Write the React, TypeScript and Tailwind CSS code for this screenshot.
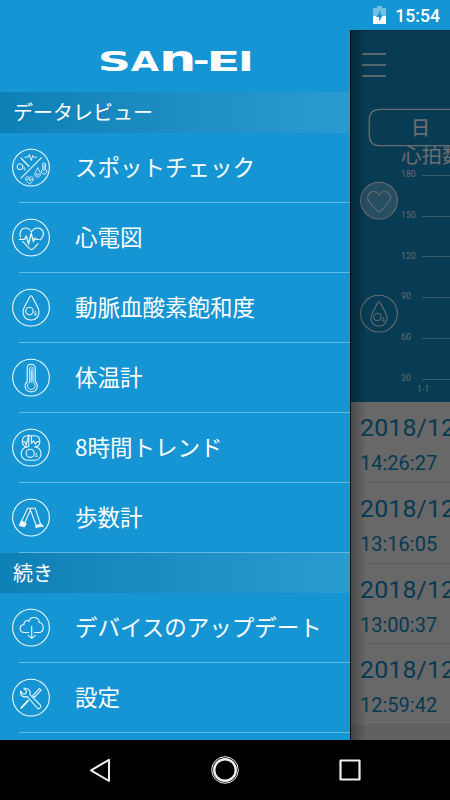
import React from "react";

const jp = "font-['Noto_Sans_CJK_JP',sans-serif]";
const roboto = "font-['Roboto',sans-serif]";

function Ring({ children, filled = false }: { children: React.ReactNode; filled?: boolean }) {
  return (
    <svg width="38" height="38" viewBox="0 0 38 38" fill="none" stroke="currentColor" strokeWidth="1.1" strokeLinecap="round" strokeLinejoin="round" className="shrink-0 overflow-visible">
      <circle cx="19" cy="18.6" r="18.4" fill={filled ? "#274d60" : "none"} />
      {children}
    </svg>
  );
}

const HEART = "M19 30 C18 30 17.2 29 16.4 28 L9.6 20.5 C7.2 17.8 7.2 14 9 11.7 C11.7 8.7 16.3 8.8 18.3 12 L19 13.2 L19.8 12 C22 8.8 26.4 8.8 29 11.7 C31 14.2 30.8 17.8 28.4 20.5 L21.6 28 C20.8 29 20 30 19 30 Z";

function Oxygen() {
  return (
    <>
      <path d="M19 6.8 C18.2 6.8 17.8 7.7 17.4 8.5 L12.4 18 C9.1 24.5 12.4 31 19 31 C25.6 31 28.9 24.5 25.6 18 L20.6 8.5 C20.2 7.7 19.8 6.8 19 6.8 Z" />
      <circle cx="17.4" cy="22" r="3.7" />
      <path d="M22.3 23.2 C22.8 21.9 24.6 22.5 24 23.7 L22.3 25.9 H24.6" strokeWidth=".9" />
    </>
  );
}

const icons = {
  spot: (
    <>
      <path d="M9 29.2 L29.5 8.7 M9 9 L17 17.5" />
      <path d="M13 8.2 H16 L17.3 5.5 L19.2 11.5 L20.8 6.5 L22 8.2 H24.7" strokeWidth=".9" />
      <circle cx="8" cy="17.7" r="2.9" strokeWidth="1" />
      <path d="M11.8 19 C12.2 18.2 13.4 18.7 12.8 19.5 L11.8 20.8 H13.4" strokeWidth=".8" />
      <path d="M17.5 35 L14.3 31.5 C12 28.5 16 26.3 17.5 29 C19 26.3 23 28.5 20.7 31.5 Z M13.8 30.3 H16 L17 29 L18 32 L19 30.3 H21" strokeWidth=".8" />
      <path d="M25.6 19 L23 24 C21.4 29.7 29.8 29.7 28.2 24 Z M24 24.5 A1.2 1.2 0 1 0 26 24.5 L27.2 26" strokeWidth=".8" />
      <path d="M30.6 14.8 A1.6 1.6 0 0 1 33.6 14.8 V20.2 A2.7 2.7 0 1 1 30.6 20.2 Z M32.1 16 V22" strokeWidth=".9" />
    </>
  ),
  ecg: (
    <>
      <path d="M8.5 18 C6.8 13.2 9.5 9 13.5 9 C16.5 9 18.2 11 19.5 13 C20.8 10.5 23 9 25.3 9 C30.4 9 33 14 30.4 18.2 L28.4 20.8 M10.7 22.3 L17.5 29.7 C19 31 20 31 21.4 29.7 L26 24.6" />
      <path d="M7.3 20.4 H12.5 L14.2 17 L16.6 25 L19.2 14.2 L21.4 22.5 L23 19 L24.3 20.4 H27" strokeWidth="1.3" />
    </>
  ),
  oxygen: <Oxygen />,
  temp: (
    <>
      <path d="M15.2 9 C15.2 3.9 23.2 3.9 23.2 9 V22.5 C27.5 27 24.5 32.9 19.2 32.9 C13.9 32.9 10.9 27 15.2 22.5 Z" />
      <path d="M17.5 9.6 C17.5 7 21 7 21 9.6 V23.4 A3.8 3.8 0 1 1 17.5 23.4 Z M19.2 10 V23.4 M19.2 14 H20.7 M19.2 17 H20.7 M19.2 20 H20.7" strokeWidth=".9" />
    </>
  ),
  trend: (
    <>
      <path d="M15.6 17.9 C11.5 17.5 10.3 15.6 10.3 12.4 C10.3 8.4 12.4 6.8 15.5 6.8 H22.6 C26 6.8 27.8 8.8 27.8 12.4 C27.8 15.8 26.5 17.7 22.8 17.9 C31.2 18.2 31.2 31.2 22.3 31.2 H15.8 C7 31.2 7 18.2 15.6 17.9 Z" />
      <path d="M10.3 12.8 H13 L14.2 16 L16.8 5.8 V17.4 M19.4 7.2 V14.3 L21.6 11.8 L23.4 15.2 L25.2 12.6 H27.6" />
      <circle cx="18.2" cy="24.3" r="4.1" />
      <path d="M23.4 25 C23.9 24 25.4 24.7 24.7 25.7 L23.4 27.4 H25.4" strokeWidth=".8" />
    </>
  ),
  walk: (
    <>
      <path d="M15.6 9.2 H23.2 L28.8 26 L24.2 26.6 L18.4 11 L12.6 24.2 L9.7 22.1 Z M18.4 9.4 V11" />
      <path d="M9.4 22 L14.2 25 L12.2 27.6 L7.4 26.4 Z M24.2 26.5 L29 25.2 L31.4 27.3 L23.6 28.2 Z" fill="currentColor" />
    </>
  ),
  cloud: (
    <>
      <path d="M16.5 23.5 H12.5 C7 23.5 6.5 16.3 12 15.5 C11.6 12 15 10.5 16.7 12.5 C18.2 6.8 27 7.2 27.2 13.5 C32.5 13.4 32.7 23.5 26.8 23.5 H22.5" />
      <path d="M19.7 17.3 V29.3 M16.2 26.3 L19.7 29.4 L23.2 26.3" />
    </>
  ),
  tools: (
    <>
      <path d="M8.6 12.2 C7.9 16.8 11.4 18.8 15 17.4 L25.2 29 C26.8 30.8 30 28.2 28.4 26.2 L18 15.6 C19 11.8 15.8 8.5 12 9.4 L14.6 12.2 L13.8 14.6 L11 15 Z" />
      <path d="M20.8 16.6 L27.4 9.6 L29.1 11.2 L22.5 18.2 Z" />
      <path d="M9.3 28.8 L16 21.7" strokeWidth="1.9" />
    </>
  ),
};

function MenuItem({ icon, label }: { icon: keyof typeof icons; label: string }) {
  return (
    <div className="h-[70px] shrink-0 flex flex-col">
      <div className="grow flex items-center gap-[25px] pl-3 text-[#edf8ff]">
        <Ring>{icons[icon]}</Ring>
        <span className={`${jp} text-[22.5px] leading-[30px] pb-[3px] whitespace-nowrap text-white`}>{label}</span>
      </div>
      <div className="ml-[19px] h-px bg-[#62b8e2]" />
    </div>
  );
}

function Section({ title, height }: { title: string; height: string }) {
  return (
    <div className={`${height} shrink-0 flex items-center pl-[13px] bg-linear-to-r from-[#0d80b6] to-[#2a9bd1]`}>
      <span className={`${jp} text-[20px] leading-[30px] pb-px text-white`}>{title}</span>
    </div>
  );
}

function Logo() {
  return (
    <div className="h-[62px] shrink-0 flex items-end justify-center pb-[17px]">
      <svg width="154" height="28" viewBox="98 47 154 28" fill="#fff" fontSize="27.4" className="overflow-visible font-['DejaVu_Sans',sans-serif] font-bold">
        <text transform="translate(97.7 70.8) scale(1.68 .96)">S</text>
        <text transform="translate(130.8 71) scale(1.336 1)">A</text>
        <text transform="translate(159 71) scale(1.48 1)" fontSize="35.5">n</text>
        <text transform="translate(192.8 70) scale(1.486 1)">-</text>
        <text transform="translate(206.6 71) scale(1.81 1)">E</text>
        <text transform="translate(238 71) scale(1.55 1)">I</text>
      </svg>
    </div>
  );
}

function Chart() {
  return (
    <div className="h-[372px] shrink-0 bg-[#083b54] border-t border-[#04293c] relative">
      <div className="flex flex-col gap-[9px] pt-[22px] pl-3">
        <i className="block h-[2px] w-6 bg-[#59676f]" />
        <i className="block h-[2px] w-6 bg-[#59676f]" />
        <i className="block h-[2px] w-6 bg-[#59676f]" />
      </div>
      <svg className="absolute left-0 top-0 text-[#6a6d6f]" width="100" height="371" viewBox="350 31 100 371" fill="none" stroke="currentColor">
        <path d="M455 109.3 H380 Q369.3 109.3 369.3 120 V135 Q369.3 145.7 380 145.7 H455" strokeWidth="1.3" />
        <path d="M422 175.5 H450 M422 216.5 H450 M422 256.5 H450 M422 297.5 H450 M422 338.5 H450 M422 379.5 H450" stroke="#3c5969" />
        <g fill="#6a6d6f" stroke="none" fontSize="8.7" className={roboto}>
          <text x="401" y="176.7">180</text>
          <text x="401" y="217.7">150</text>
          <text x="401" y="258.7">120</text>
          <text x="401" y="299.4">90</text>
          <text x="401" y="340.2">60</text>
          <text x="401" y="381">30</text>
          <text x="417" y="392.2">1-1</text>
        </g>
        <g fill="#6e6d6d" stroke="none" className={jp}>
          <text x="411" y="134.7" fontSize="19" fontWeight="500">日</text>
          <text x="401" y="163" fontSize="20.5">心拍数</text>
        </g>
      </svg>
      <div className="absolute left-[9.5px] top-[151px] text-[#6a6d6f]"><Ring filled><path d={HEART} /></Ring></div>
      <div className="absolute left-[9.5px] top-[264px] text-[#6a6d6f]"><Ring><Oxygen /></Ring></div>
    </div>
  );
}

const records = ["14:26:27", "13:16:05", "13:00:37", "12:59:42"];

export default function App() {
  return (
    <div className="w-[450px] h-[800px] flex flex-col overflow-hidden bg-black">
      <header className="h-[30px] shrink-0 bg-[#1695d4] flex items-center justify-end pr-[10px] gap-[9px]">
        <svg width="13" height="18" viewBox="0 0 13 18">
          <path d="M4 0 H9 V2 H12 Q13 2 13 3 V10 H0 V3 Q0 2 1 2 H4 Z" fill="#73c0e5" />
          <path d="M0 10 H13 V17 Q13 18 12 18 H1 Q0 18 0 17 Z" fill="#fff" />
          <path d="M8 4 L3 11 H6 V15.5 L10 9 H7.5 Z" fill="#1695d4" />
        </svg>
        <span className={`${roboto} font-medium text-white text-[17.6px] leading-[30px] pt-px`}>15:54</span>
      </header>
      <div className="h-[710px] shrink-0 flex">
        <aside className="w-[350px] shrink-0 bg-[#1695d4] flex flex-col overflow-hidden">
          <Logo />
          <Section title="データレビュー" height="h-[41px]" />
          <MenuItem icon="spot" label="スポットチェック" />
          <MenuItem icon="ecg" label="心電図" />
          <MenuItem icon="oxygen" label="動脈血酸素飽和度" />
          <MenuItem icon="temp" label="体温計" />
          <MenuItem icon="trend" label="8時間トレンド" />
          <MenuItem icon="walk" label="歩数計" />
          <Section title="続き" height="h-10" />
          <MenuItem icon="cloud" label="デバイスのアップデート" />
          <MenuItem icon="tools" label="設定" />
        </aside>
        <main className="w-[100px] bg-[#616161] flex flex-col overflow-hidden relative">
          <Chart />
          <div className={`${roboto} text-[#063a53] bg-[#686868]`}>
            {records.map((time) => (
              <div key={time} className="h-[80.8px] flex flex-col whitespace-nowrap">
                <div className="grow pl-[10px] pt-[11px]">
                  <div className="text-[24.8px] leading-[30px] tracking-[0.2px]">2018/12/05</div>
                  <div className="text-[20px] leading-[26px] pt-[7px]">{time}</div>
                </div>
                <div className="ml-[18px] h-px bg-[#5b5b5b]" />
              </div>
            ))}
          </div>
          <div className="absolute inset-y-0 left-0 w-4 bg-linear-to-r from-black/30 to-transparent border-l border-black/80" />
        </main>
      </div>
      <nav className="h-[60px] shrink-0 bg-black flex items-center justify-between px-[87px]">
        <svg width="26" height="28" viewBox="0 0 26 28" fill="none" stroke="#eee" strokeWidth="2" strokeLinejoin="round"><path d="M22 3.8 V25 L4 14.3 Z" /></svg>
        <svg width="28" height="28" viewBox="0 0 28 28" fill="none" stroke="#eee"><circle cx="14" cy="14" r="13.3" strokeWidth="1" /><circle cx="14" cy="14" r="10.8" strokeWidth="2.4" /></svg>
        <svg width="26" height="28" viewBox="0 0 26 28" fill="none" stroke="#eee" strokeWidth="2.2" strokeLinejoin="round"><path d="M3.5 4.5 H22.5 V23.5 H3.5 Z" /></svg>
      </nav>
    </div>
  );
}
